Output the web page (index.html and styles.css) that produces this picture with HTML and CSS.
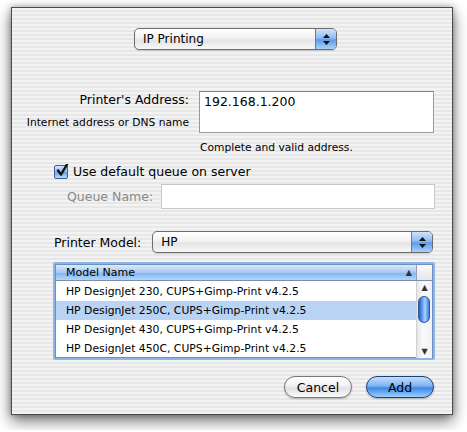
FILE: index.html
```html
<!DOCTYPE html>
<html lang="en">
<head>
    <meta charset="UTF-8">
    <title>Add Printer - IP Printing</title>
    <link rel="stylesheet" href="styles.css">
</head>
<body>
    <div class="sheet">
        <!-- connection type popup -->
        <div class="top-row">
            <div class="popup popup-type">
                <span class="popup-label">IP Printing</span>
                <span class="popup-arrows">
                    <svg width="7" height="11" viewBox="0 0 7 11"><path d="M3.5 0 L7 4 L0 4 Z M0 7 L7 7 L3.5 11 Z" fill="#111"/></svg>
                </span>
            </div>
        </div>

        <!-- address -->
        <div class="address-row">
            <div class="address-labels">
                <div class="label">Printer's Address:</div>
                <div class="small">Internet address or DNS name</div>
            </div>
            <div class="field address-field">192.168.1.200</div>
        </div>
        <div class="small hint">Complete and valid address.</div>

        <!-- queue -->
        <label class="check-row">
            <span class="checkbox">
                <svg width="14" height="14" viewBox="0 0 14 14"><path d="M3 6.5 L6 10.5 L12 0.5" stroke="#111" stroke-width="2.4" fill="none" stroke-linecap="round" stroke-linejoin="round"/></svg>
            </span>
            <span class="label">Use default queue on server</span>
        </label>
        <div class="queue-row">
            <span class="label disabled">Queue Name:</span>
            <div class="field queue-field"></div>
        </div>

        <!-- model -->
        <div class="model-row">
            <span class="label">Printer Model:</span>
            <div class="popup popup-model">
                <span class="popup-label">HP</span>
                <span class="popup-arrows">
                    <svg width="7" height="11" viewBox="0 0 7 11"><path d="M3.5 0 L7 4 L0 4 Z M0 7 L7 7 L3.5 11 Z" fill="#111"/></svg>
                </span>
            </div>
        </div>

        <div class="list-ring">
            <div class="list">
                <div class="list-head">
                    <div class="head-cell">Model Name <span class="sort">▲</span></div>
                    <div class="head-corner"></div>
                </div>
                <div class="list-body">
                    <div class="rows">
                        <div class="row">HP DesignJet 230, CUPS+Gimp-Print v4.2.5</div>
                        <div class="row selected">HP DesignJet 250C, CUPS+Gimp-Print v4.2.5</div>
                        <div class="row">HP DesignJet 430, CUPS+Gimp-Print v4.2.5</div>
                        <div class="row">HP DesignJet 450C, CUPS+Gimp-Print v4.2.5</div>
                    </div>
                    <div class="scrollbar">
                        <span class="arrow">▲</span>
                        <div class="track">
                            <div class="thumb"></div>
                        </div>
                        <span class="arrow">▼</span>
                    </div>
                </div>
            </div>
        </div>

        <div class="buttons">
            <button class="btn">Cancel</button>
            <button class="btn btn-default">Add</button>
        </div>
    </div>
</body>
</html>
```

FILE: styles.css
```css
body {
    margin: 0;
    padding: 7px 12px 15px 11px;
    background: #fff;
    font-family: 'DejaVu Sans', sans-serif;
    color: #000;
}
.sheet {
    width: 442px;
    height: 408px;
    border: 1px solid #4a4a4a;
    background: repeating-linear-gradient(180deg, #f3f3f3 0, #f3f3f3 2px, #e7e7e7 2px, #e7e7e7 4px);
    box-shadow: 0 6px 14px rgba(0, 0, 0, 0.55), 0 0 6px rgba(0, 0, 0, 0.3);
    box-sizing: border-box;
    padding: 20px 0 0 0;
}
.label {
    font-size: 12.5px;
}
.small {
    font-size: 10.7px;
}
.disabled {
    color: #8a8a8a;
}

/* Popup menus */
.popup {
    display: flex;
    align-items: center;
    height: 20px;
    border: 1px solid #6d6d6d;
    border-radius: 5px;
    background: linear-gradient(180deg, #fff 0%, #f2f2f2 45%, #e4e4e4 55%, #f7f7f7 100%);
    box-shadow: 0 1px 1px rgba(0, 0, 0, 0.15);
    overflow: hidden;
}
.popup-label {
    flex: 1;
    font-size: 12px;
    padding-left: 8px;
}
.popup-arrows {
    width: 20px;
    height: 20px;
    display: flex;
    align-items: center;
    justify-content: center;
    border-left: 1px solid #5a7db0;
    background: linear-gradient(180deg, #cfe3fb 0%, #8fbcf1 45%, #5f9be6 55%, #a9d2fb 100%);
}
.top-row {
    display: flex;
    padding-left: 122px;
}
.popup-type {
    width: 201px;
}

/* Address */
.address-row {
    display: flex;
    margin-top: 41px;
}
.address-labels {
    width: 177px;
    text-align: right;
}
.address-labels .label {
    margin-top: 1px;
}
.address-labels .small {
    margin-top: 9px;
}
.field {
    background: #fff;
    border: 1px solid #9a9a9a;
    border-top-color: #808080;
    box-sizing: border-box;
}
.address-field {
    margin-left: 10px;
    width: 235px;
    height: 42px;
    font-size: 12.5px;
    padding: 2px 0 0 4px;
}
.hint {
    margin: 8px 0 0 188px;
}

/* Queue */
.check-row {
    display: flex;
    align-items: center;
    margin: 10px 0 0 42px;
}
.checkbox {
    width: 12px;
    height: 12px;
    border: 1px solid #3d5f94;
    border-radius: 2px;
    background: linear-gradient(180deg, #d4e7fd 0%, #8ebbee 50%, #6aa3e8 55%, #b7dbff 100%);
    position: relative;
    margin-right: 5px;
}
.checkbox svg {
    position: absolute;
    left: 0;
    top: -2px;
}
.queue-row {
    display: flex;
    align-items: center;
    margin: 5px 0 0 55px;
}
.queue-field {
    margin-left: 8px;
    width: 274px;
    height: 25px;
    border-color: #c8c8c8;
}

/* Model */
.model-row {
    display: flex;
    align-items: center;
    margin: 22px 0 0 42px;
}
.popup-model {
    margin-left: 11px;
    width: 279px;
}

/* Model list */
.list-ring {
    margin: 9px 0 0 41px;
    width: 382px;
    height: 98px;
    box-sizing: border-box;
    border: 2px solid #8cb4e6;
    border-radius: 2px;
}
.list {
    border: 1px solid #6f8fbd;
    height: 100%;
    box-sizing: border-box;
    background: #fff;
    display: flex;
    flex-direction: column;
}
.list-head {
    display: flex;
    height: 15px;
    border-bottom: 1px solid #7a8fa8;
}
.head-cell {
    flex: 1;
    font-size: 11px;
    line-height: 15px;
    padding-left: 10px;
    position: relative;
    background: linear-gradient(180deg, #dcebfc 0%, #a3c8f4 50%, #86b6ee 55%, #b4d5fa 100%);
    border-right: 1px solid #8fa2b9;
}
.sort {
    position: absolute;
    right: 4px;
    top: 0;
    font-size: 8px;
    color: #333;
}
.head-corner {
    width: 15px;
    background: linear-gradient(180deg, #fafafa, #e5e5e5);
}
.list-body {
    flex: 1;
    display: flex;
}
.rows {
    flex: 1;
    padding-top: 1px;
}
.row {
    height: 19px;
    line-height: 19px;
    font-size: 10.8px;
    padding-left: 10px;
}
.row.selected {
    background: #b8d3f3;
}
.scrollbar {
    width: 15px;
    display: flex;
    flex-direction: column;
    align-items: center;
    border-left: 1px solid #d0d0d0;
    background: linear-gradient(90deg, #e6e6e6, #fafafa 40%, #f2f2f2);
}
.arrow {
    font-size: 8px;
    height: 13px;
    line-height: 13px;
    color: #333;
}
.track {
    flex: 1;
    width: 100%;
    padding-top: 2px;
}
.thumb {
    width: 12px;
    height: 27px;
    margin-left: 1px;
    border: 1px solid #2c55a0;
    border-radius: 7px;
    box-sizing: border-box;
    background: linear-gradient(90deg, #1e5ecf 0%, #71aaf2 40%, #a9d2ff 60%, #3b7de0 100%);
}

/* Buttons */
.buttons {
    display: flex;
    justify-content: flex-end;
    gap: 14px;
    margin: 16px 18px 0 0;
}
.btn {
    width: 68px;
    height: 22px;
    border-radius: 11px;
    font-family: 'DejaVu Sans', sans-serif;
    font-size: 12.5px;
    border: 1px solid #777;
    background: linear-gradient(180deg, #fff 0%, #f1f1f1 45%, #e1e1e1 55%, #fafafa 100%);
    box-shadow: 0 1px 2px rgba(0, 0, 0, 0.25);
    padding: 0;
    color: #000;
}
.btn-default {
    border-color: #1f3f7a;
    background: linear-gradient(180deg, #c4defd 0%, #7db3f1 45%, #3f88e6 55%, #9ed0ff 100%);
}
```
